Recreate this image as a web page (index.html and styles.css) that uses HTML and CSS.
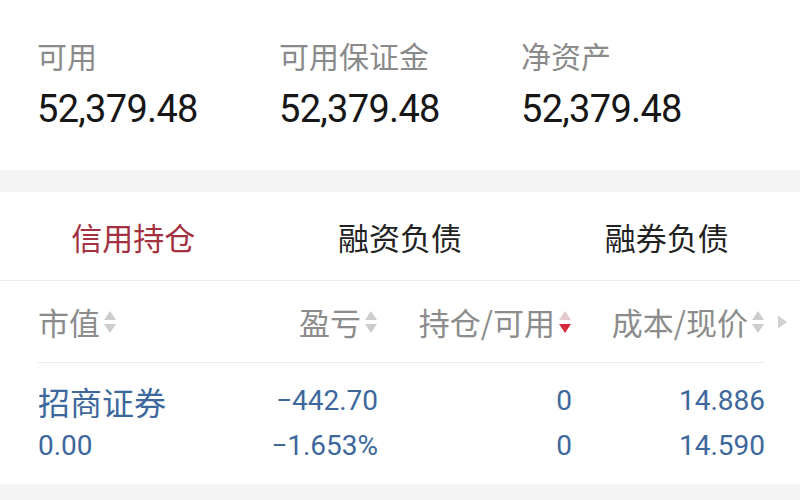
FILE: index.html
```html
<!DOCTYPE html>
<html lang="zh-CN">
<head>
<meta charset="utf-8">
<link rel="stylesheet" href="styles.css">
</head>
<body>
<div class="page">
  <section class="summary">
    <div class="stat">
      <div class="label">可用</div>
      <div class="value">52,379.48</div>
    </div>
    <div class="stat">
      <div class="label">可用保证金</div>
      <div class="value">52,379.48</div>
    </div>
    <div class="stat">
      <div class="label">净资产</div>
      <div class="value">52,379.48</div>
    </div>
  </section>
  <div class="band"></div>
  <nav class="tabs">
    <div class="tab active">信用持仓</div>
    <div class="tab">融资负债</div>
    <div class="tab">融券负债</div>
  </nav>
  <div class="table">
    <div class="head">
      <div class="hcell left">市值<svg class="sort" viewBox="0 0 14 26"><path class="up" d="M1 11 L13 11 L7 2 Z"/><path class="down" d="M1 15 L13 15 L7 24 Z"/></svg></div>
      <div class="hcell">盈亏<svg class="sort" viewBox="0 0 14 26"><path class="up" d="M1 11 L13 11 L7 2 Z"/><path class="down" d="M1 15 L13 15 L7 24 Z"/></svg></div>
      <div class="hcell">持仓/可用<svg class="sort" viewBox="0 0 14 26"><path class="up pink" d="M1 11 L13 11 L7 2 Z"/><path class="down red" d="M1 15 L13 15 L7 24 Z"/></svg></div>
      <div class="hcell">成本/现价<svg class="sort" viewBox="0 0 14 26"><path class="up" d="M1 11 L13 11 L7 2 Z"/><path class="down" d="M1 15 L13 15 L7 24 Z"/></svg></div>
      <div class="more"><svg viewBox="0 0 12 14"><path d="M1 0 L11 7 L1 14 Z"/></svg></div>
    </div>
    <div class="row">
      <div class="cell left name">招商证券</div>
      <div class="cell num">−442.70</div>
      <div class="cell num">0</div>
      <div class="cell num">14.886</div>
      <div class="cell left sub">0.00</div>
      <div class="cell num sub">−1.653%</div>
      <div class="cell num sub">0</div>
      <div class="cell num sub">14.590</div>
    </div>
  </div>
  <div class="band bottom"></div>
</div>
</body>
</html>
```
FILE: styles.css
```css
* { box-sizing: border-box; }
html, body { margin: 0; padding: 0; background: #fff; }
body {
  font-family: Roboto, "Noto Sans CJK SC", sans-serif;
  width: 800px;
  height: 500px;
  overflow: hidden;
}
.page { width: 800px; }

.summary {
  height: 170px;
  display: grid;
  grid-template-columns: 242px 242px 1fr;
  padding: 36px 0 0 37px;
}
.label {
  font-family: "Noto Sans CJK SC", sans-serif;
  font-size: 30px;
  line-height: 38px;
  color: #8a8a8a;
}
.value {
  margin-top: 12px;
  font-size: 38px;
  line-height: 46px;
  color: #161616;
  letter-spacing: -0.7px;
}

.band { height: 22px; background: #f4f4f4; }
.band.bottom { height: 20px; }

.tabs {
  display: grid;
  grid-template-columns: 1fr 1fr 1fr;
  height: 89px;
  border-bottom: 1px solid #ececec;
}
.tab {
  display: flex;
  align-items: center;
  justify-content: center;
  font-family: "Noto Sans CJK SC", sans-serif;
  font-size: 31px;
  color: #222;
}
.tab.active { color: #a3313f; }

.table { padding: 0 35px 0 38px; }
.head {
  display: grid;
  grid-template-columns: 152px 188px 194px 193px 0;
  height: 82px;
  align-items: center;
  border-bottom: 1px solid #ececec;
}
.row {
  display: grid;
  grid-template-columns: 152px 188px 194px 193px;
  padding: 17px 0 14px;
  height: 121px;
  color: #3c689c;
}
.hcell {
  display: flex;
  align-items: center;
  justify-content: flex-end;
  font-family: "Noto Sans CJK SC", sans-serif;
  font-size: 31px;
  color: #8c8c8c;
  white-space: nowrap;
}
.hcell.left { justify-content: flex-start; }
.sort { width: 14px; height: 26px; margin-left: 3px; flex: none; }
.sort path { fill: #cdcdcd; }
.sort path.pink { fill: #e6c9cd; }
.sort path.red { fill: #d42c3a; }
.more { width: 0; overflow: visible; display: flex; align-items: center; }
.more svg { width: 11px; height: 14px; margin-left: 12px; flex: none; }
.more path { fill: #d0d0d0; }

.cell { font-size: 28px; line-height: 42px; text-align: right; white-space: nowrap; }
.cell.left { text-align: left; }
.cell.name {
  font-family: "Noto Sans CJK SC", sans-serif;
  font-size: 32px;
}
.cell.sub { line-height: 44px; }
```
